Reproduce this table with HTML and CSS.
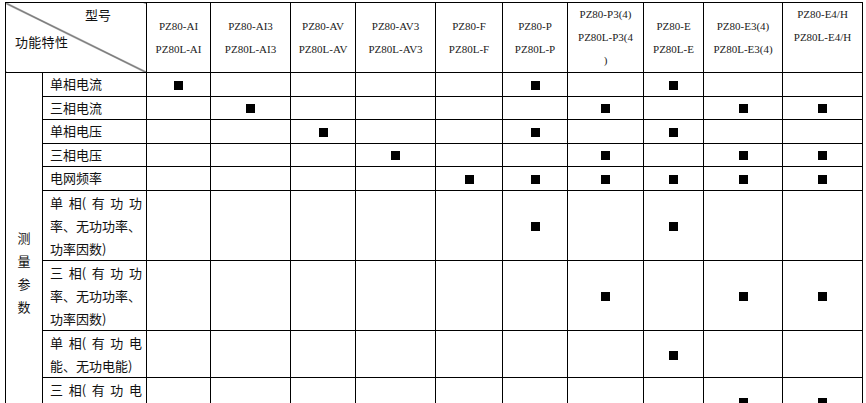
FILE: index.html
```html
<!DOCTYPE html>
<html lang="zh-CN">
<head>
<meta charset="utf-8">
<title>PZ80 功能特性</title>
<link rel="stylesheet" href="styles.css">
</head>
<body>
<table class="spec">
  <colgroup>
    <col class="c-grp"><col class="c-lbl"><col class="c-ai"><col class="c-ai3"><col class="c-av"><col class="c-av3"><col class="c-f"><col class="c-p"><col class="c-p3"><col class="c-e"><col class="c-e3"><col class="c-e4">
  </colgroup>
  <thead>
    <tr class="hdr">
      <th colspan="2" class="corner"><div class="corner-top">型号</div><div class="corner-bottom">功能特性</div></th>
      <th class="model">PZ80-AI<br>PZ80L-AI</th>
      <th class="model">PZ80-AI3<br>PZ80L-AI3</th>
      <th class="model">PZ80-AV<br>PZ80L-AV</th>
      <th class="model">PZ80-AV3<br>PZ80L-AV3</th>
      <th class="model">PZ80-F<br>PZ80L-F</th>
      <th class="model">PZ80-P<br>PZ80L-P</th>
      <th class="model">PZ80-P3(4)<br>PZ80L-P3(4<br>)</th>
      <th class="model">PZ80-E<br>PZ80L-E</th>
      <th class="model">PZ80-E3(4)<br>PZ80L-E3(4)</th>
      <th class="model top">PZ80-E4/H<br>PZ80L-E4/H</th>
    </tr>
  </thead>
  <tbody>
    <tr class="r1">
      <td rowspan="9" class="grp">测<br>量<br>参<br>数</td>
      <td class="lbl">单相电流</td>
      <td class="m"><span class="sq"></span></td><td class="m"></td><td class="m"></td><td class="m"></td><td class="m"></td>
      <td class="m"><span class="sq"></span></td><td class="m"></td><td class="m"><span class="sq"></span></td><td class="m"></td><td class="m"></td>
    </tr>
    <tr class="r1">
      <td class="lbl">三相电流</td>
      <td class="m"></td><td class="m"><span class="sq"></span></td><td class="m"></td><td class="m"></td><td class="m"></td>
      <td class="m"></td><td class="m"><span class="sq"></span></td><td class="m"></td><td class="m"><span class="sq"></span></td><td class="m"><span class="sq"></span></td>
    </tr>
    <tr class="r1">
      <td class="lbl">单相电压</td>
      <td class="m"></td><td class="m"></td><td class="m"><span class="sq"></span></td><td class="m"></td><td class="m"></td>
      <td class="m"><span class="sq"></span></td><td class="m"></td><td class="m"><span class="sq"></span></td><td class="m"></td><td class="m"></td>
    </tr>
    <tr class="r1">
      <td class="lbl">三相电压</td>
      <td class="m"></td><td class="m"></td><td class="m"></td><td class="m"><span class="sq"></span></td><td class="m"></td>
      <td class="m"></td><td class="m"><span class="sq"></span></td><td class="m"></td><td class="m"><span class="sq"></span></td><td class="m"><span class="sq"></span></td>
    </tr>
    <tr class="r1">
      <td class="lbl">电网频率</td>
      <td class="m"></td><td class="m"></td><td class="m"></td><td class="m"></td><td class="m"><span class="sq"></span></td>
      <td class="m"><span class="sq"></span></td><td class="m"><span class="sq"></span></td><td class="m"><span class="sq"></span></td><td class="m"><span class="sq"></span></td><td class="m"><span class="sq"></span></td>
    </tr>
    <tr class="r3">
      <td class="lbl"><span class="jl"><span>单</span><span>相(</span><span>有</span><span>功</span><span>功</span></span><span class="ln">率<span class="pu">、</span>无功功率<span class="pu">、</span></span><span class="ln">功率因数)</span></td>
      <td class="m"></td><td class="m"></td><td class="m"></td><td class="m"></td><td class="m"></td>
      <td class="m"><span class="sq"></span></td><td class="m"></td><td class="m"><span class="sq"></span></td><td class="m"></td><td class="m"></td>
    </tr>
    <tr class="r3">
      <td class="lbl"><span class="jl"><span>三</span><span>相(</span><span>有</span><span>功</span><span>功</span></span><span class="ln">率<span class="pu">、</span>无功功率<span class="pu">、</span></span><span class="ln">功率因数)</span></td>
      <td class="m"></td><td class="m"></td><td class="m"></td><td class="m"></td><td class="m"></td>
      <td class="m"></td><td class="m"><span class="sq"></span></td><td class="m"></td><td class="m"><span class="sq"></span></td><td class="m"><span class="sq"></span></td>
    </tr>
    <tr class="r2">
      <td class="lbl"><span class="jl"><span>单</span><span>相(</span><span>有</span><span>功</span><span>电</span></span><span class="ln">能<span class="pu">、</span>无功电能)</span></td>
      <td class="m"></td><td class="m"></td><td class="m"></td><td class="m"></td><td class="m"></td>
      <td class="m"></td><td class="m"></td><td class="m"><span class="sq"></span></td><td class="m"></td><td class="m"></td>
    </tr>
    <tr class="r2">
      <td class="lbl"><span class="jl"><span>三</span><span>相(</span><span>有</span><span>功</span><span>电</span></span><span class="ln">能<span class="pu">、</span>无功电能)</span></td>
      <td class="m"></td><td class="m"></td><td class="m"></td><td class="m"></td><td class="m"></td>
      <td class="m"></td><td class="m"></td><td class="m"></td><td class="m"><span class="sq"></span></td><td class="m"><span class="sq"></span></td>
    </tr>
  </tbody>
</table>
</body>
</html>
```

FILE: styles.css
```css
html, body {
  background: #fff;
}
html {
  overflow: hidden;
}
body {
  margin: 2px 0 0 5px;
  font-family: "Noto Sans CJK SC", "Noto Sans", sans-serif;
  font-size: 13px;
  color: #111;
}
.spec {
  border-collapse: collapse;
  table-layout: fixed;
  width: 857px;
}
.spec th,
.spec td {
  border: 1px solid #000;
  padding: 0;
}
.c-grp { width: 37px; }
.c-lbl { width: 104px; }
.c-ai { width: 64px; }
.c-ai3 { width: 80px; }
.c-av { width: 65px; }
.c-av3 { width: 80px; }
.c-f { width: 67px; }
.c-p { width: 65px; }
.c-p3 { width: 76px; }
.c-e { width: 60px; }
.c-e3 { width: 79px; }
.c-e4 { width: 80px; }

.hdr th {
  line-height: 23px;
  font-weight: normal;
}
.spec .model {
  font-family: "Liberation Serif", "Times New Roman", serif;
  font-size: 11px;
  color: #222;
  text-align: center;
  vertical-align: middle;
}
.spec .model.top {
  vertical-align: top;
}
.spec .corner {
  vertical-align: top;
  text-align: left;
  background: linear-gradient(to top right, transparent calc(50% - 0.9px), #000 50%, transparent calc(50% + 0.9px));
}
.corner-top {
  text-align: right;
  padding-right: 35px;
}
.corner-bottom {
  padding-left: 9px;
  margin-top: 4px;
  letter-spacing: 0.3px;
}

.r1 td { line-height: 22.5px; }
.r2 td,
.r3 td { line-height: 23px; }

.spec .lbl {
  padding: 0 4px 0 7px;
  text-align: left;
  vertical-align: middle;
}
.jl {
  display: flex;
  justify-content: space-between;
}
.ln {
  display: block;
}
.pu {
  display: inline-block;
  width: 1em;
  text-align: left;
}
.spec .m {
  text-align: center;
  vertical-align: middle;
}
.sq {
  display: inline-block;
  width: 9px;
  height: 9px;
  background: #000;
  vertical-align: middle;
}
.spec .grp {
  vertical-align: top;
  text-align: center;
  line-height: 23px;
  padding-top: 153px;
}
```
